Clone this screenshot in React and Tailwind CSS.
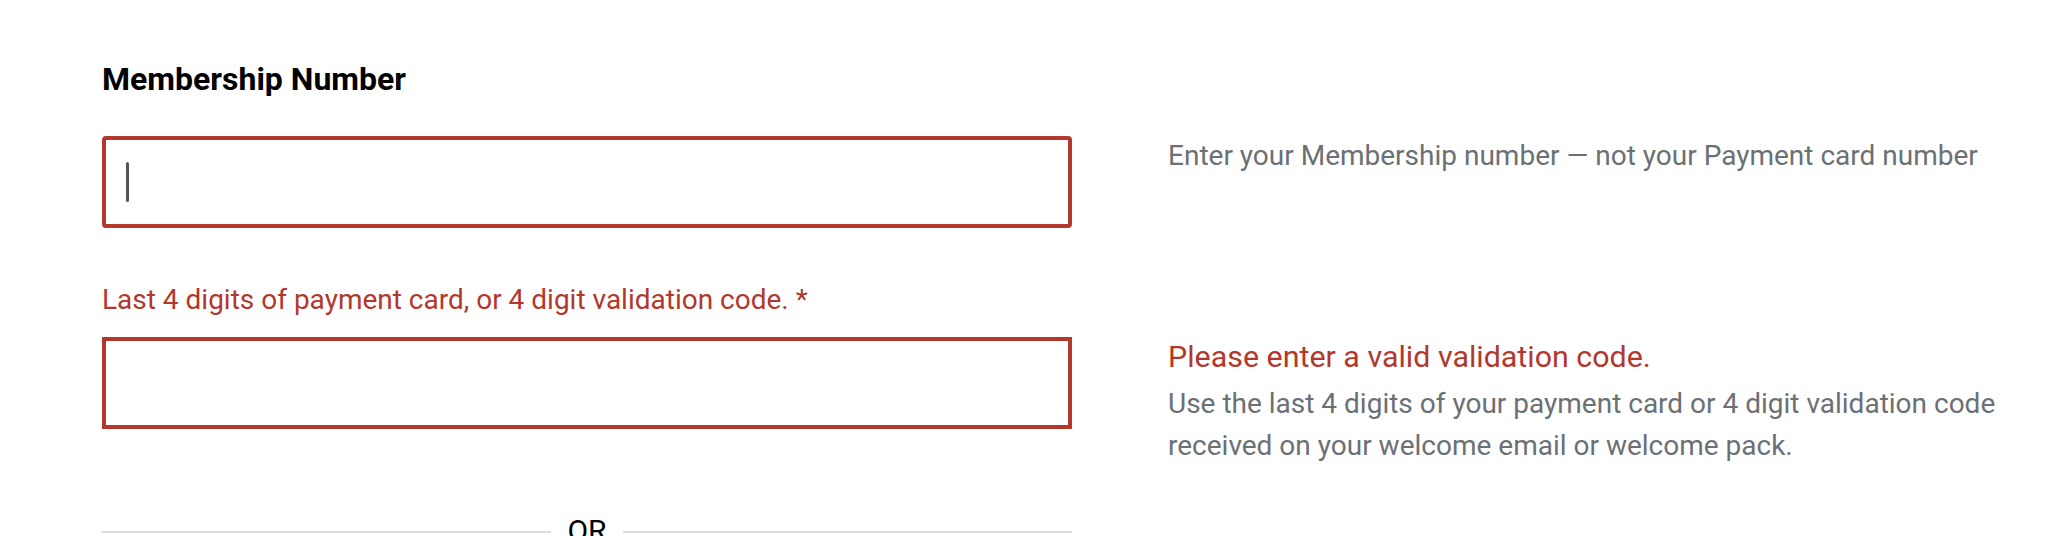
import React from 'react';

const red = 'text-[#b2372c]';

const App = () => {
  return (
    <div className="min-h-[536px] bg-white font-['Roboto','Liberation_Sans',sans-serif]">
      <div className="grid grid-cols-[970px_1fr] gap-x-[96px] pl-[102px] pt-[59px]">
        {/* Membership number */}
        <h2 className="col-start-1 text-[32px] leading-[40px] font-bold text-black">
          Membership Number
        </h2>
        <div className="col-start-1 mt-[37px] flex h-[92px] items-center rounded-[4px] border-[4px] border-[#b2372c] pl-[20px]">
          <div className="h-[40px] w-[3px] rounded-full bg-[#555555]" />
        </div>
        <p className="mt-[36px] text-[28px] leading-[42px] text-[#6b7075]">
          Enter your Membership number — not your Payment card number
        </p>

        {/* Validation code */}
        <label className={`col-start-1 mt-[54px] text-[28px] leading-[36px] ${red}`}>
          Last 4 digits of payment card, or 4 digit validation code. *
        </label>
        <div className="col-start-1 mt-[19px] h-[92px] border-[4px] border-[#b2372c]" />
        <div className="row-span-2 mt-[18px] leading-[42px]">
          <p className={`mb-[5px] text-[30.4px] ${red}`}>Please enter a valid validation code.</p>
          <p className="text-[28px] text-[#6b7075]">
            Use the last 4 digits of your payment card or 4 digit validation code
            <br />
            received on your welcome email or welcome pack.
          </p>
        </div>

        {/* Divider */}
        <div className="col-start-1 mt-[87px] flex items-center gap-[16px]">
          <div className="mt-[2px] h-[2px] flex-1 bg-[#dcdcdc]" />
          <span className="text-[30px] leading-[30px] text-black">OR</span>
          <div className="mt-[2px] h-[2px] flex-1 bg-[#dcdcdc]" />
        </div>
      </div>
    </div>
  );
};

export default App;
